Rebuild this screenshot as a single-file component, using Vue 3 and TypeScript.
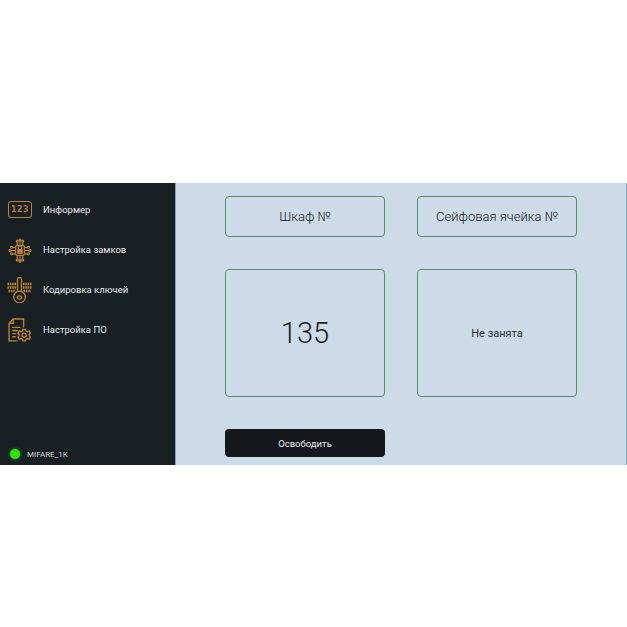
<script setup lang="ts">
const items = [
  { label: 'Информер', icon: 'num' },
  { label: 'Настройка замков', icon: 'lock' },
  { label: 'Кодировка ключей', icon: 'key' },
  { label: 'Настройка ПО', icon: 'doc' },
]
</script>

<template>
  <div class="page">
    <div class="frame">
      <aside class="side">
        <nav class="menu">
          <div v-for="item in items" :key="item.label" class="item">
            <span class="ico">
              <span v-if="item.icon === 'num'" class="num">123</span>
              <svg v-else-if="item.icon === 'lock'" viewBox="0 0 24 24" width="26" height="26" fill="none" stroke="#b98434" stroke-width="1.100">
                <rect x="8" y="8" width="8" height="9" rx="1" />
                <rect x="10" y="11.500" width="4" height="3.500" fill="#b98434" />
                <path d="M10.500 11V9.500a1.500 1.500 0 0 1 3 0V11" />
                <path d="M8 9.500H5M8 12.500H3.500M8 15.500H5M16 9.500h3M16 12.500h4.500M16 15.500h3M9.500 8V4.500M12 8V3.500M14.500 8V4.500M9.500 17v3.500M12 17v4.500M14.500 17v3.500" />
                <circle cx="9.500" cy="3.800" r="0.900" /><circle cx="12" cy="2.800" r="0.900" /><circle cx="14.500" cy="3.800" r="0.900" />
                <circle cx="4.200" cy="9.500" r="0.900" /><circle cx="2.700" cy="12.500" r="0.900" /><circle cx="4.200" cy="15.500" r="0.900" />
                <circle cx="19.800" cy="9.500" r="0.900" /><circle cx="21.300" cy="12.500" r="0.900" /><circle cx="19.800" cy="15.500" r="0.900" />
                <circle cx="9.500" cy="21.200" r="0.900" /><circle cx="12" cy="22.300" r="0.900" /><circle cx="14.500" cy="21.200" r="0.900" />
              </svg>
              <svg v-else-if="item.icon === 'key'" viewBox="0 0 26 26" width="26" height="26" fill="none" stroke="#b98434" stroke-width="1.300">
                <path d="M10.500 15V2.500a2 2 0 0 1 4 0V15" />
                <circle cx="12.500" cy="20" r="5.800" />
                <ellipse cx="12.500" cy="20.500" rx="2.200" ry="1.600" />
                <path d="M0.500 7h8.500M0.500 10.500h8.500M1.500 14h7M16 7h9M16 10.500h9M16.500 14h7.500" stroke-width="2.400" stroke-dasharray="1.600 0.700" />
              </svg>
              <svg v-else viewBox="0 0 24 24" width="25" height="25" fill="none" stroke="#b98434" stroke-width="1.300">
                <path d="M9 22H1V5l4-4h10v8" />
                <path d="M5 1v4H1" />
                <path d="M4 9h8M4 12h5.500M4 15h4M4 18h3.500" />
                <g transform="translate(-1.500 -0.500)">
                  <circle cx="17" cy="17" r="2" />
                  <path d="M15.700 11.500h2.600l.4 1.600 1.500.7 1.500-.8 1.300 2.200-1.200 1.100v1.400l1.200 1.100-1.300 2.200-1.500-.8-1.500.7-.4 1.600h-2.600l-.4-1.600-1.500-.7-1.500.8-1.300-2.200 1.200-1.100v-1.400l-1.200-1.100 1.300-2.200 1.500.8 1.500-.7z" />
                </g>
              </svg>
            </span>
            <span class="label">{{ item.label }}</span>
          </div>
        </nav>
        <div class="status">
          <span class="dot"></span>
          <span class="card">MIFARE_1K</span>
        </div>
      </aside>
      <main class="main">
        <div class="grid">
          <div class="box head">Шкаф №</div>
          <div class="box head">Сейфовая ячейка №</div>
          <div class="box big">135</div>
          <div class="box state">Не занята</div>
          <button class="release" type="button">Освободить</button>
        </div>
      </main>
    </div>
  </div>
</template>

<style>
html, body { margin: 0; background: #fff; }
</style>

<style scoped>
.page {
  height: 627px;
  padding-top: 183px;
  box-sizing: border-box;
  font-family: Roboto, "Liberation Sans", sans-serif;
}
.frame {
  display: flex;
  height: 282px;
  width: 627px;
}
.side {
  width: 175px;
  flex: none;
  background: #192024;
  display: flex;
  flex-direction: column;
  justify-content: space-between;
  border-right: 1px solid #8da0ad;
}
.menu {
  display: flex;
  flex-direction: column;
  gap: 16px;
  padding-top: 14px;
}
.item {
  display: flex;
  align-items: center;
  height: 24px;
  padding-left: 7px;
}
.ico {
  width: 26px;
  height: 24px;
  display: flex;
  align-items: center;
  justify-content: center;
  margin-right: 10px;
  position: relative;
  top: 1px;
}
.num {
  box-sizing: border-box;
  width: 24px;
  height: 17px;
  border: 1px solid #b98434;
  border-radius: 3px;
  color: #b98434;
  font: 700 9px/15px "DejaVu Sans Mono", monospace;
  letter-spacing: 0.6px;
  text-align: center;
  position: relative;
  top: -1px;
}
.label {
  color: #e6eaec;
  font-size: 9.500px;
}
.status {
  display: flex;
  align-items: center;
  padding: 0 0 5px 10px;
  height: 12px;
}
.dot {
  width: 10px;
  height: 10px;
  border-radius: 50%;
  background: #2fe00f;
  box-shadow: 0 0 3px #27c40c;
  margin-right: 7px;
}
.card {
  color: #cfd6da;
  font-size: 8px;
}
.main {
  flex: 1;
  background: #cddbe8;
  border-right: 1px solid #8fa9bd;
  padding: 13px 0 0 49px;
}
.grid {
  display: grid;
  grid-template-columns: 160px 160px;
  grid-template-rows: 41px 128px 28px;
  column-gap: 32px;
  row-gap: 32px;
}
.box {
  box-sizing: border-box;
  border: 1px solid #5f8a6e;
  border-radius: 4px;
  display: flex;
  align-items: center;
  justify-content: center;
  color: #2a2d30;
}
.head {
  font-size: 13px;
  font-weight: 300;
  color: #17191b;
}
.big {
  font-size: 29px;
  font-weight: 300;
  color: #1c1f21;
}
.state {
  font-size: 11px;
}
.release {
  border: 0;
  border-radius: 4px;
  background: #16191c;
  color: #e6eaec;
  font-family: inherit;
  font-size: 9.500px;
  padding: 0;
}
</style>
